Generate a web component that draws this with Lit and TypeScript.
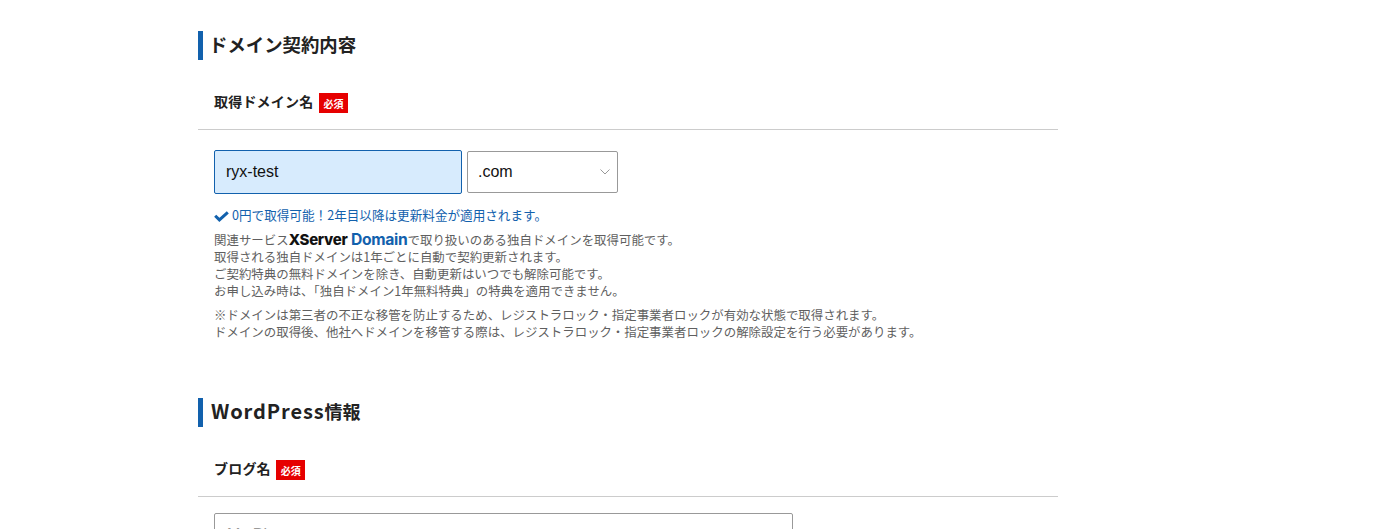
import { LitElement, html, css } from "lit";
import { customElement } from "lit/decorators.js";

@customElement("app-root")
export class AppRoot extends LitElement {
  static styles = css`
    :host {
      display: block;
      height: 529px;
      overflow: hidden;
      background: #fff;
      color: #222;
      font-family: "Noto Sans CJK JP", "Noto Sans", sans-serif;
    }
    .wrap {
      width: 860px;
      margin-left: 198px;
      padding-top: 31px;
    }
    .heading {
      margin: 0;
      height: 29px;
      border-left: 5px solid #1261ad;
      padding-left: 6px;
      font-size: 18.4px;
      font-weight: 700;
      line-height: 27px;
      color: #222;
    }
    .heading.latin {
      padding-left: 8px;
      font-size: 18px;
      line-height: 25px;
    }
    .heading.latin span {
      font-size: 20px;
      letter-spacing: 0.9px;
    }
    .label-row {
      display: flex;
      align-items: center;
      gap: 5.5px;
      height: 20px;
      margin-top: 33px;
      padding: 0 16px 16px;
      border-bottom: 1px solid #ccc;
      font-size: 14px;
      font-weight: 700;
    }
    .label-row > span:first-child {
      margin-bottom: 5px;
      letter-spacing: 0.2px;
    }
    .req {
      width: 29px;
      height: 20px;
      display: flex;
      align-items: center;
      justify-content: center;
      background: #e60000;
      color: #fff;
      font-size: 10px;
      font-weight: 700;
    }
    .body {
      padding: 20px 16px 0;
    }
    .fields {
      display: flex;
      align-items: center;
      gap: 5px;
    }
    .input {
      box-sizing: border-box;
      width: 248px;
      height: 44px;
      display: flex;
      align-items: center;
      padding: 0 11px;
      background: #d7ebfd;
      border: 1px solid #1261ad;
      border-radius: 2px;
      font-family: "Liberation Sans", Arial, sans-serif;
      font-size: 16px;
      color: #111;
    }
    .select {
      box-sizing: border-box;
      width: 151px;
      height: 42px;
      display: flex;
      align-items: center;
      justify-content: space-between;
      padding: 0 7px 0 10px;
      background: #fff;
      border: 1px solid #999;
      border-radius: 2px;
      font-family: "Liberation Sans", Arial, sans-serif;
      font-size: 16px;
      color: #111;
    }
    .ok {
      display: flex;
      align-items: center;
      gap: 3px;
      margin-top: 13px;
      height: 18px;
      font-size: 12.6px;
      line-height: 18px;
      color: #1261ad;
    }
    .ok span {
      margin-bottom: 2px;
    }
    .notes {
      margin: 7px 0 0;
      font-size: 12.45px;
      line-height: 17px;
      color: #5f5f5f;
    }
    .notes.second {
      margin-top: 7px;
    }
    .xs {
      font-family: "Inter", "Liberation Sans", sans-serif;
      font-weight: 700;
      font-size: 15.7px;
      letter-spacing: -0.3px;
      line-height: 1;
      color: #111;
    }
    .xs b {
      font-size: 15px;
      font-weight: 800;
    }
    .xs span {
      color: #1261ad;
    }
    .section2 {
      margin-top: 57px;
    }
    .blog {
      box-sizing: border-box;
      width: 579px;
      height: 44px;
      padding: 0 12px;
      display: flex;
      align-items: center;
      background: #fff;
      border: 1px solid #999;
      border-radius: 2px;
      font-family: "Liberation Sans", Arial, sans-serif;
      font-size: 16px;
      color: #999;
    }
    .body.b2 {
      padding-top: 16px;
    }
  `;

  render() {
    return html`
      <div class="wrap">
        <h2 class="heading">ドメイン契約内容</h2>
        <div class="label-row"><span>取得ドメイン名</span><span class="req">必須</span></div>
        <div class="body">
          <div class="fields">
            <div class="input">ryx-test</div>
            <div class="select">
              <span>.com</span>
              <svg width="10" height="6" viewBox="0 0 10 6" fill="none" stroke="#999" stroke-width="1">
                <path d="M0.5 0.5 L5 5 L9.5 0.5" />
              </svg>
            </div>
          </div>
          <div class="ok">
            <svg width="15" height="11" viewBox="0 0 15 11" fill="none" stroke="#1261ad" stroke-width="3">
              <path d="M1.2 4.7 L5.4 8.9 L13.8 1.3" />
            </svg>
            <span>0円で取得可能！2年目以降は更新料金が適用されます。</span>
          </div>
          <p class="notes">
            関連サービス<span class="xs"><b>XServer</b> <span>Domain</span></span>で取り扱いのある独自ドメインを取得可能です。<br />
            取得される独自ドメインは1年ごとに自動で契約更新されます。<br />
            ご契約特典の無料ドメインを除き、自動更新はいつでも解除可能です。<br />
            お申し込み時は、「独自ドメイン1年無料特典」の特典を適用できません。
          </p>
          <p class="notes second">
            ※ドメインは第三者の不正な移管を防止するため、レジストラロック・指定事業者ロックが有効な状態で取得されます。<br />
            ドメインの取得後、他社へドメインを移管する際は、レジストラロック・指定事業者ロックの解除設定を行う必要があります。
          </p>
        </div>
        <div class="section2">
          <h2 class="heading latin"><span>WordPress</span>情報</h2>
          <div class="label-row"><span>ブログ名</span><span class="req">必須</span></div>
          <div class="body b2">
            <div class="blog">My Blog</div>
          </div>
        </div>
      </div>
    `;
  }
}
